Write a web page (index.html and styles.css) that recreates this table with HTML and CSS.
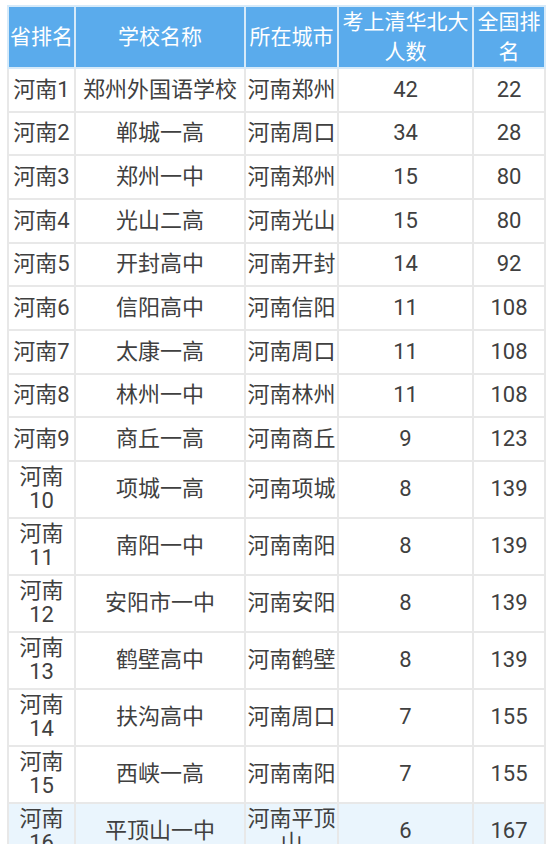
FILE: index.html
```html
<!DOCTYPE html>
<html lang="zh-CN">
<head>
<meta charset="utf-8">
<title>河南高校排名</title>
<link rel="stylesheet" href="styles.css">
</head>
<body>
<div class="wrap">
<table class="rank">
<colgroup>
<col class="c1"><col class="c2"><col class="c3"><col class="c4"><col class="c5">
</colgroup>
<thead>
<tr class="head">
<th>省排名</th><th>学校名称</th><th>所在城市</th><th>考上清华北大<br>人数</th><th>全国排<br>名</th>
</tr>
</thead>
<tbody>
<tr class="one"><td>河南1</td><td>郑州外国语学校</td><td>河南郑州</td><td>42</td><td>22</td></tr>
<tr class="one"><td>河南2</td><td>郸城一高</td><td>河南周口</td><td>34</td><td>28</td></tr>
<tr class="one"><td>河南3</td><td>郑州一中</td><td>河南郑州</td><td>15</td><td>80</td></tr>
<tr class="one"><td>河南4</td><td>光山二高</td><td>河南光山</td><td>15</td><td>80</td></tr>
<tr class="one"><td>河南5</td><td>开封高中</td><td>河南开封</td><td>14</td><td>92</td></tr>
<tr class="one"><td>河南6</td><td>信阳高中</td><td>河南信阳</td><td>11</td><td>108</td></tr>
<tr class="one"><td>河南7</td><td>太康一高</td><td>河南周口</td><td>11</td><td>108</td></tr>
<tr class="one"><td>河南8</td><td>林州一中</td><td>河南林州</td><td>11</td><td>108</td></tr>
<tr class="one"><td>河南9</td><td>商丘一高</td><td>河南商丘</td><td>9</td><td>123</td></tr>
<tr class="two"><td>河南<br>10</td><td>项城一高</td><td>河南项城</td><td>8</td><td>139</td></tr>
<tr class="two"><td>河南<br>11</td><td>南阳一中</td><td>河南南阳</td><td>8</td><td>139</td></tr>
<tr class="two"><td>河南<br>12</td><td>安阳市一中</td><td>河南安阳</td><td>8</td><td>139</td></tr>
<tr class="two"><td>河南<br>13</td><td>鹤壁高中</td><td>河南鹤壁</td><td>8</td><td>139</td></tr>
<tr class="two"><td>河南<br>14</td><td>扶沟高中</td><td>河南周口</td><td>7</td><td>155</td></tr>
<tr class="two"><td>河南<br>15</td><td>西峡一高</td><td>河南南阳</td><td>7</td><td>155</td></tr>
<tr class="two hl"><td>河南<br>16</td><td>平顶山一中</td><td>河南平顶<br>山</td><td>6</td><td>167</td></tr>
</tbody>
</table>
</div>
</body>
</html>
```
FILE: styles.css
```css
html, body {
  margin: 0;
  padding: 0;
  background: #ffffff;
}
body {
  font-family: Roboto, "Noto Sans CJK SC", sans-serif;
  color: #404040;
  overflow: hidden;
}
.wrap {
  padding: 5px 0 0 7px;
}
.rank {
  table-layout: fixed;
  width: 537px;
  border-collapse: collapse;
  font-size: 22px;
  white-space: nowrap;
}
.c1 { width: 67px; }
.c2 { width: 170px; }
.c3 { width: 93px; }
.c4 { width: 135px; }
.c5 { width: 72px; }
.rank th,
.rank td {
  padding: 0;
  text-align: center;
  vertical-align: middle;
  border: 2px solid #e8e8e8;
}
.rank th {
  background: #5aabec;
  color: #ffffff;
  font-weight: 400;
  font-size: 21px;
  line-height: 30px;
  border-color: #d6eaf9;
}
.head { height: 61px; }
.rank td {
  line-height: 24px;
  background: #ffffff;
}
.one { height: 43.67px; }
.two { height: 57px; }
.hl td { background: #eaf5fd; }
```
